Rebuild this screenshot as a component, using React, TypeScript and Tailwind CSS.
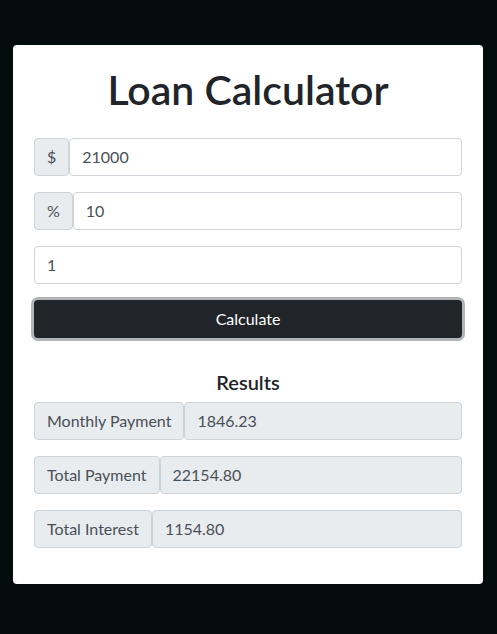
import React from "react";

const font = { fontFamily: "Lato, 'Noto Sans', 'Liberation Sans', sans-serif" };

function InputRow({ addon, value }: { addon?: string; value: string }) {
  return (
    <div className="flex h-[38px]">
      {addon && (
        <div className="flex items-center px-[12px] bg-[#e9ecef] border border-[#ced4da] rounded-[4px] text-[16px] text-[#495057]">
          {addon}
        </div>
      )}
      <div className="flex-1 flex items-center px-[12px] bg-white border border-[#ced4da] rounded-[4px] text-[16px] text-[#495057]">
        {value}
      </div>
    </div>
  );
}

function ResultRow({ label, value }: { label: string; value: string }) {
  return (
    <div className="flex h-[38px]">
      <div className="flex items-center px-[12px] bg-[#e9ecef] border border-[#ced4da] rounded-[4px] text-[16px] text-[#495057]">
        {label}
      </div>
      <div className="flex-1 flex items-center px-[12px] bg-[#e9ecef] border border-[#ced4da] rounded-[4px] text-[16px] text-[#495057]">
        {value}
      </div>
    </div>
  );
}

export default function App() {
  return (
    <div className="min-h-[634px] bg-[#030c0d] pt-[45px]" style={font}>
      <div className="ml-[13px] w-[470px] bg-white rounded-[4px] px-[21px] pt-[21px] pb-[36px]">
        <h1 className="text-center text-[41px] leading-[48px] font-semibold text-[#212529]">
          Loan Calculator
        </h1>
        <div className="mt-[24px] flex flex-col gap-[16px]">
          <InputRow addon="$" value="21000" />
          <InputRow addon="%" value="10" />
          <InputRow value="1" />
          <button className="h-[38px] w-full rounded-[4px] bg-[#212529] text-white text-[16px] ring-[3px] ring-[#b1b3b5]">
            Calculate
          </button>
        </div>
        <h4 className="mt-[32px] mb-[8px] text-center text-[20px] leading-[24px] font-semibold text-[#212529]">
          Results
        </h4>
        <div className="flex flex-col gap-[16px]">
          <ResultRow label="Monthly Payment" value="1846.23" />
          <ResultRow label="Total Payment" value="22154.80" />
          <ResultRow label="Total Interest" value="1154.80" />
        </div>
      </div>
    </div>
  );
}
